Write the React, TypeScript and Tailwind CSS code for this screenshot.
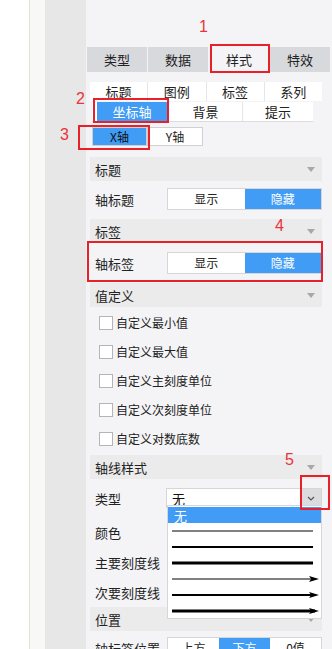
import React from 'react';

const BLUE = 'bg-[#409cf5]';

function SectionHeader({ title }: { title: string }) {
  return (
    <div className="flex items-center justify-between h-[24px] bg-[#ebebeb] pl-[5px] pr-[7px] text-[13px] text-[#222]">
      <span>{title}</span>
      <span className="w-0 h-0 border-l-[4px] border-r-[4px] border-t-[5px] border-l-transparent border-r-transparent border-t-[#a8a8a8]" />
    </div>
  );
}

function Toggle({ options, active }: { options: string[]; active: number }) {
  return (
    <div className="flex w-[155px] h-[22px] border border-[#d6d6d6] bg-white">
      {options.map((o, i) => (
        <div
          key={o}
          className={`flex-1 flex items-center justify-center text-[12px] ${i === active ? `${BLUE} text-white` : 'text-[#222]'}`}
        >
          {o}
        </div>
      ))}
    </div>
  );
}

function Checkbox({ label }: { label: string }) {
  return (
    <div className="flex items-center h-[29px] pl-[9px] gap-[3px] text-[12px] text-[#222]">
      <span className="w-[14px] h-[14px] border border-[#b5b5b5] bg-white" />
      <span>{label}</span>
    </div>
  );
}

function LineSample({ thick, arrow }: { thick: number; arrow?: boolean }) {
  return (
    <div className="h-[16px] flex items-center pl-[4px] pr-[2px]">
      <svg width="148" height="8" viewBox="0 0 148 8">
        <line x1="0" y1="4" x2={arrow ? 144 : 142} y2="4" stroke="#000" strokeWidth={thick} />
        {arrow && <polygon points="138,1 148,4 138,7 140,4" fill="#000" />}
      </svg>
    </div>
  );
}

export default function App() {
  return (
    <div
      className="relative w-[332px] h-[649px] overflow-hidden flex bg-white"
      style={{ fontFamily: '"Noto Sans CJK SC", "Noto Sans", sans-serif' }}
    >
      <div className="w-[29px] bg-white" />
      <div className="w-[16px] bg-[#f8f8f6] border-l border-[#e2e2da]" />
      <div className="w-[41px] bg-[#e7e7e7]" />

      {/* main panel */}
      <div className="flex-1 bg-[#f4f4f6] pt-[47px] leading-none">
        {/* top tabs */}
        <div className="ml-px mr-[2px] grid grid-cols-4 gap-px h-[25px] text-[13px] text-[#222]">
          <div className="bg-[#d8d9dd] flex items-center justify-center">类型</div>
          <div className="bg-[#d8d9dd] flex items-center justify-center">数据</div>
          <div className="flex items-center justify-center">样式</div>
          <div className="bg-[#d8d9dd] flex items-center justify-center">特效</div>
        </div>

        {/* sub tabs */}
        <div className="ml-[4px] mr-[10px] mt-[10px] text-[13px] text-[#222]">
          <div className="grid grid-cols-4 gap-px h-[19px] bg-[#e6e6e6]">
            {['标题', '图例', '标签', '系列'].map(t => (
              <div key={t} className="bg-white flex items-center justify-center">{t}</div>
            ))}
          </div>
          <div className="flex h-[21px] ml-[2px] mr-[9px] pt-px border-b border-[#dcdcdc]">
            <div className="bg-white pl-[5px] w-[76px]">
              <div className={`${BLUE} text-white h-[19px] w-[70px] flex items-center justify-center`}>坐标轴</div>
            </div>
            <div className="w-[74px] bg-white border-l border-[#e6e6e6] flex items-center justify-center">背景</div>
            <div className="flex-1 bg-white border-l border-[#e6e6e6] flex items-center justify-center">提示</div>
          </div>
          <div className="flex ml-[2px] mt-[5px] h-[19px] text-[12px]">
            <div className={`${BLUE} w-[55px] border border-[#d0d0d0] flex items-center justify-center text-[#111]`}>X轴</div>
            <div className="bg-white w-[56px] border border-[#d0d0d0] flex items-center justify-center">Y轴</div>
          </div>
        </div>

        {/* sections */}
        <div className="ml-[4px] mr-[10px] mt-[11px] text-[13px] text-[#222]">
          <SectionHeader title="标题" />
          <div className="flex items-center justify-between h-[38px] pl-[5px] pb-[2px]">
            <span>轴标题</span>
            <Toggle options={['显示', '隐藏']} active={1} />
          </div>

          <SectionHeader title="标签" />
          <div className="flex items-center justify-between h-[40px] pl-[5px]">
            <span>轴标签</span>
            <Toggle options={['显示', '隐藏']} active={1} />
          </div>

          <SectionHeader title="值定义" />
          <div className="pt-[1px] pb-[2px]">
            <Checkbox label="自定义最小值" />
            <Checkbox label="自定义最大值" />
            <Checkbox label="自定义主刻度单位" />
            <Checkbox label="自定义次刻度单位" />
            <Checkbox label="自定义对数底数" />
          </div>

          <SectionHeader title="轴线样式" />
          <div className="pl-[5px]">
            <div className="flex items-center justify-between h-[38px]">
              <span>类型</span>
              <div className="flex w-[156px] h-[20px] border border-[#d6d6d6] bg-white">
                <span className="flex-1 flex items-center pl-[5px] text-[13px] text-[#111]">无</span>
                <span className="w-[21px] bg-[#dcdcde] flex items-center justify-center">
                  <svg width="8" height="5" viewBox="0 0 8 5">
                    <polyline points="1,1 4,4 7,1" fill="none" stroke="#555" strokeWidth="1.2" />
                  </svg>
                </span>
              </div>
            </div>
            <div className="h-[30px] flex items-center">颜色</div>
            <div className="h-[30px] flex items-center">主要刻度线</div>
            <div className="h-[30px] flex items-center">次要刻度线</div>
          </div>

          <SectionHeader title="位置" />
          <div className="flex items-center justify-between h-[34px] pl-[5px]">
            <span>轴标签位置</span>
            <Toggle options={['上方', '下方', '0值']} active={1} />
          </div>
        </div>
      </div>

      {/* open dropdown list */}
      <div className="absolute left-[167px] top-[505px] w-[155px] h-[114px] bg-white border border-[#d6d6d6] pt-px">
        <div className={`${BLUE} h-[16px] flex items-center pl-[6px] text-[13px] text-white leading-none`}>无</div>
        <LineSample thick={1} />
        <LineSample thick={2} />
        <LineSample thick={3} />
        <LineSample thick={1} arrow />
        <LineSample thick={2} arrow />
        <LineSample thick={3} arrow />
      </div>

      {/* annotations */}
      <div className="absolute left-[210px] top-[44px] w-[60px] h-[29px] border-2 border-[#e8202a]" />
      <div className="absolute left-[93px] top-[98px] w-[76px] h-[25px] border-2 border-[#e8202a]" />
      <div className="absolute left-[78px] top-[125px] w-[72px] h-[25px] border-2 border-[#e8202a]" />
      <div className="absolute left-[87px] top-[241px] w-[236px] h-[41px] border-2 border-[#e8202a]" />
      <div className="absolute left-[300px] top-[475px] w-[30px] h-[35px] border-2 border-[#e8202a]" />

      <span className="absolute left-[199px] top-[19px] text-[16px] leading-none text-[#e8343a]" style={{ fontFamily: '"Liberation Sans", sans-serif' }}>1</span>
      <span className="absolute left-[76px] top-[91px] text-[16px] leading-none text-[#e8343a]" style={{ fontFamily: '"Liberation Sans", sans-serif' }}>2</span>
      <span className="absolute left-[60px] top-[127px] text-[16px] leading-none text-[#e8343a]" style={{ fontFamily: '"Liberation Sans", sans-serif' }}>3</span>
      <span className="absolute left-[275px] top-[218px] text-[16px] leading-none text-[#e8343a]" style={{ fontFamily: '"Liberation Sans", sans-serif' }}>4</span>
      <span className="absolute left-[285px] top-[452px] text-[16px] leading-none text-[#e8343a]" style={{ fontFamily: '"Liberation Sans", sans-serif' }}>5</span>
    </div>
  );
}
